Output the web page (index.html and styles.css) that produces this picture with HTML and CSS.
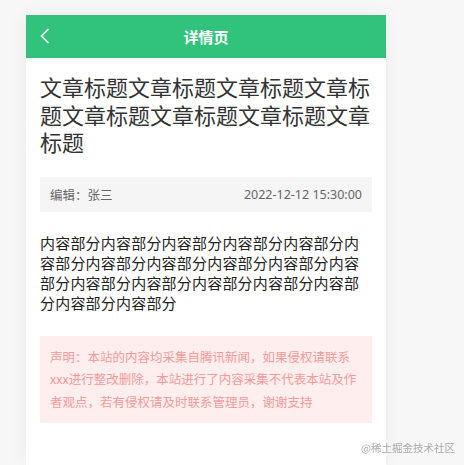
FILE: index.html
```html
<!DOCTYPE html>
<html lang="zh-CN">
<head>
  <meta charset="UTF-8" />
  <meta name="viewport" content="width=device-width, initial-scale=1.0"/>
  <title>详情页</title>
  <link rel="stylesheet" href="styles.css">
</head>
<body>

  <div class="page">
    <div class="header">
      <span class="back">
        <svg width="12" height="16" viewBox="0 0 12 16">
          <path d="M9.5 1 L2.5 8 L9.5 15" fill="none" stroke="#fff" stroke-width="1.6"/>
        </svg>
      </span>
      <h1 class="header-title">详情页</h1>
    </div>

    <div class="article">
      <h2 class="title">文章标题文章标题文章标题文章标题文章标题文章标题文章标题文章标题</h2>

      <div class="meta">
        <span>编辑：张三</span>
        <span>2022-12-12 15:30:00</span>
      </div>

      <p class="content">内容部分内容部分内容部分内容部分内容部分内容部分内容部分内容部分内容部分内容部分内容部分内容部分内容部分内容部分内容部分内容部分内容部分内容部分</p>

      <div class="notice">声明：本站的内容均采集自腾讯新闻，如果侵权请联系xxx进行整改删除，本站进行了内容采集不代表本站及作者观点，若有侵权请及时联系管理员，谢谢支持</div>
    </div>
  </div>

  <div class="watermark">@稀土掘金技术社区</div>

</body>
</html>
```

FILE: styles.css
```css
* { box-sizing: border-box; }
body {
  font-family: "Noto Sans", "Noto Sans CJK SC", sans-serif;
  margin: 0;
  padding: 15px 0 0 26px;
  background: #f7f7f7;
  color: #333;
  overflow: hidden;
  height: 465px;
}

.page {
  width: 360px;
  height: 450px;
  background: #fff;
  box-shadow: 0 0 18px rgba(0, 0, 0, 0.05);
}

/* top bar */
.header {
  height: 43px;
  background: #31c27c;
  display: flex;
  align-items: center;
  justify-content: center;
  position: relative;
}

.back {
  position: absolute;
  left: 13px;
  top: 13px;
  display: flex;
}

.header-title {
  margin: 0;
  color: #fff;
  font-size: 15px;
  font-weight: bold;
  font-family: "Noto Sans CJK SC", sans-serif;
}

.article {
  padding: 15px 14px 0 14px;
}

.title {
  margin: 0;
  font-size: 22px;
  line-height: 27.5px;
  font-weight: normal;
  color: #333;
  font-family: "Noto Sans CJK SC", sans-serif;
}

.meta {
  margin-top: 21px;
  height: 35px;
  background: #f5f5f5;
  display: flex;
  align-items: center;
  justify-content: space-between;
  padding: 0 10px;
  font-size: 12.5px;
  color: #666;
}

.content {
  margin: 21px 0 0 0;
  font-size: 15px;
  line-height: 20px;
  letter-spacing: 0.2px;
  color: #222;
  font-family: "Noto Sans CJK SC", sans-serif;
}

.notice {
  margin-top: 23px;
  background: #ffeeee;
  padding: 10px;
  font-size: 12.5px;
  line-height: 22.5px;
  color: #f59a9a;
  font-family: "Noto Sans CJK SC", sans-serif;
}

.watermark {
  position: fixed;
  right: 9px;
  bottom: 10px;
  font-size: 10.5px;
  color: #aaa;
  font-family: "Noto Sans CJK SC", sans-serif;
}
```
